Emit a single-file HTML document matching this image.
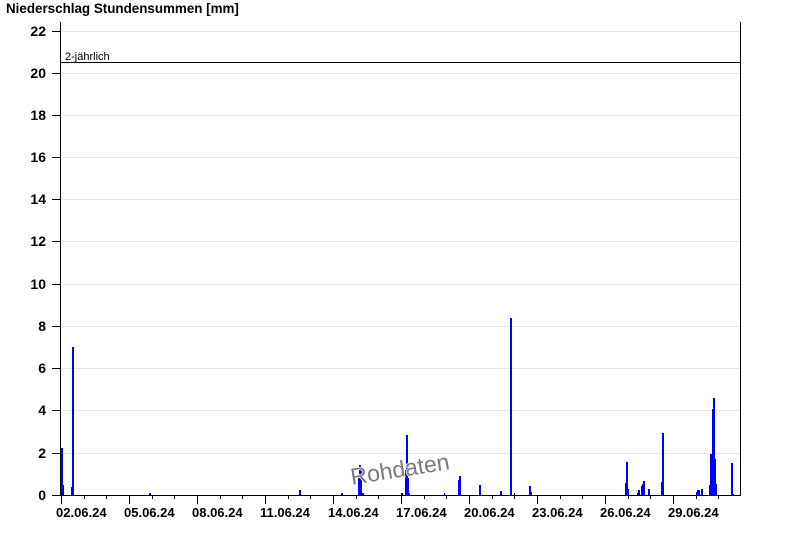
<!DOCTYPE html>
<html><head><meta charset="utf-8"><style>
html,body{margin:0;padding:0;background:#fff;}
svg{display:block;font-family:"Liberation Sans",Arial,sans-serif;}
</style></head><body>
<svg width="800" height="550" viewBox="0 0 800 550" xmlns="http://www.w3.org/2000/svg">
<text x="6" y="13" font-size="13.4" font-weight="bold" fill="#000">Niederschlag Stundensummen [mm]</text>
<g stroke="#e8e8e8" stroke-width="1">
<line x1="61" y1="31.5" x2="740" y2="31.5"/><line x1="61" y1="73.5" x2="740" y2="73.5"/>
<line x1="61" y1="115.5" x2="740" y2="115.5"/><line x1="61" y1="157.5" x2="740" y2="157.5"/>
<line x1="61" y1="199.5" x2="740" y2="199.5"/><line x1="61" y1="241.5" x2="740" y2="241.5"/>
<line x1="61" y1="284.5" x2="740" y2="284.5"/><line x1="61" y1="326.5" x2="740" y2="326.5"/>
<line x1="61" y1="368.5" x2="740" y2="368.5"/><line x1="61" y1="410.5" x2="740" y2="410.5"/>
<line x1="61" y1="453.5" x2="740" y2="453.5"/>
</g>
<g font-size="14" font-weight="bold" text-anchor="end" fill="#000">
<text x="46" y="36">22</text><text x="46" y="78">20</text><text x="46" y="120">18</text>
<text x="46" y="162">16</text><text x="46" y="204">14</text><text x="46" y="246">12</text>
<text x="46" y="289">10</text><text x="46" y="331">8</text><text x="46" y="373">6</text>
<text x="46" y="415">4</text><text x="46" y="458">2</text><text x="46" y="500">0</text>
</g>
<g stroke="#000" stroke-width="1">
<line x1="52" y1="31.5" x2="60" y2="31.5"/><line x1="52" y1="73.5" x2="60" y2="73.5"/>
<line x1="52" y1="115.5" x2="60" y2="115.5"/><line x1="52" y1="157.5" x2="60" y2="157.5"/>
<line x1="52" y1="199.5" x2="60" y2="199.5"/><line x1="52" y1="241.5" x2="60" y2="241.5"/>
<line x1="52" y1="284.5" x2="60" y2="284.5"/><line x1="52" y1="326.5" x2="60" y2="326.5"/>
<line x1="52" y1="368.5" x2="60" y2="368.5"/><line x1="52" y1="410.5" x2="60" y2="410.5"/>
<line x1="52" y1="453.5" x2="60" y2="453.5"/><line x1="52" y1="495.5" x2="60" y2="495.5"/>
</g>
<g fill="#0000ff">
<rect x="61" y="448" width="2" height="47"/><rect x="63" y="485" width="1" height="10"/>
<rect x="71" y="487" width="1" height="8"/><rect x="72" y="347" width="2" height="148"/>
<rect x="149" y="493" width="2" height="2"/>
<rect x="299" y="490" width="2" height="5"/>
<rect x="341" y="493" width="2" height="2"/>
<rect x="358" y="476" width="1" height="19"/><rect x="359" y="465" width="2" height="30"/><rect x="361" y="470" width="1" height="25"/><rect x="362" y="493" width="2" height="2"/>
<rect x="401" y="493" width="2" height="2"/>
<rect x="405" y="470" width="1" height="25"/><rect x="406" y="435" width="2" height="60"/><rect x="408" y="478" width="1" height="17"/><rect x="409" y="493" width="1" height="2"/>
<rect x="444" y="493" width="1" height="2"/>
<rect x="458" y="480" width="1" height="15"/><rect x="459" y="476" width="2" height="19"/>
<rect x="479" y="485" width="2" height="10"/>
<rect x="500" y="491" width="2" height="4"/>
<rect x="510" y="318" width="2" height="177"/>
<rect x="514" y="493" width="1" height="2"/>
<rect x="529" y="486" width="2" height="9"/><rect x="531" y="492" width="1" height="3"/>
<rect x="625" y="483" width="1" height="12"/><rect x="626" y="462" width="2" height="33"/><rect x="628" y="489" width="1" height="6"/>
<rect x="637" y="493" width="1" height="2"/><rect x="638" y="490" width="2" height="5"/><rect x="641" y="486" width="1" height="9"/><rect x="642" y="484" width="1" height="11"/><rect x="643" y="481" width="2" height="14"/><rect x="648" y="489" width="2" height="6"/>
<rect x="661" y="482" width="1" height="13"/><rect x="662" y="433" width="2" height="62"/>
<rect x="696" y="492" width="1" height="3"/><rect x="697" y="490" width="3" height="5"/><rect x="701" y="489" width="2" height="6"/>
<rect x="709" y="485" width="1" height="10"/><rect x="710" y="454" width="2" height="41"/><rect x="712" y="409" width="1" height="86"/><rect x="713" y="398" width="2" height="97"/><rect x="715" y="459" width="1" height="36"/><rect x="716" y="484" width="1" height="11"/>
<rect x="731" y="463" width="2" height="32"/><rect x="733" y="494" width="1" height="1"/>
</g>
<line x1="60" y1="62.5" x2="740" y2="62.5" stroke="#000" stroke-width="1"/>
<text x="65" y="60" font-size="11" fill="#000">2-jährlich</text>
<line x1="60.5" y1="22" x2="60.5" y2="496" stroke="#000"/>
<line x1="740.5" y1="22" x2="740.5" y2="496" stroke="#000"/>
<line x1="60" y1="495.5" x2="741" y2="495.5" stroke="#000"/>
<g stroke="#000" stroke-width="1">
<line x1="61.5" y1="495" x2="61.5" y2="504"/><line x1="129.5" y1="495" x2="129.5" y2="504"/>
<line x1="197.5" y1="495" x2="197.5" y2="504"/><line x1="265.5" y1="495" x2="265.5" y2="504"/>
<line x1="333.5" y1="495" x2="333.5" y2="504"/><line x1="401.5" y1="495" x2="401.5" y2="504"/>
<line x1="469.5" y1="495" x2="469.5" y2="504"/><line x1="537.5" y1="495" x2="537.5" y2="504"/>
<line x1="605.5" y1="495" x2="605.5" y2="504"/><line x1="673.5" y1="495" x2="673.5" y2="504"/>
<line x1="84.5" y1="495" x2="84.5" y2="499"/><line x1="106.5" y1="495" x2="106.5" y2="499"/>
<line x1="152.5" y1="495" x2="152.5" y2="499"/><line x1="174.5" y1="495" x2="174.5" y2="499"/>
<line x1="220.5" y1="495" x2="220.5" y2="499"/><line x1="242.5" y1="495" x2="242.5" y2="499"/>
<line x1="288.5" y1="495" x2="288.5" y2="499"/><line x1="310.5" y1="495" x2="310.5" y2="499"/>
<line x1="356.5" y1="495" x2="356.5" y2="499"/><line x1="378.5" y1="495" x2="378.5" y2="499"/>
<line x1="424.5" y1="495" x2="424.5" y2="499"/><line x1="446.5" y1="495" x2="446.5" y2="499"/>
<line x1="492.5" y1="495" x2="492.5" y2="499"/><line x1="514.5" y1="495" x2="514.5" y2="499"/>
<line x1="560.5" y1="495" x2="560.5" y2="499"/><line x1="582.5" y1="495" x2="582.5" y2="499"/>
<line x1="628.5" y1="495" x2="628.5" y2="499"/><line x1="650.5" y1="495" x2="650.5" y2="499"/>
<line x1="696.5" y1="495" x2="696.5" y2="499"/><line x1="718.5" y1="495" x2="718.5" y2="499"/>
</g>
<g font-size="13" font-weight="bold" fill="#000">
<text x="56" y="517">02.06.24</text><text x="124" y="517">05.06.24</text>
<text x="192" y="517">08.06.24</text><text x="260" y="517">11.06.24</text>
<text x="328" y="517">14.06.24</text><text x="396" y="517">17.06.24</text>
<text x="464" y="517">20.06.24</text><text x="532" y="517">23.06.24</text>
<text x="600" y="517">26.06.24</text><text x="668" y="517">29.06.24</text>
</g>
<text x="400" y="477" font-size="23" text-anchor="middle" fill="#7a7a7a" stroke="#fff" stroke-width="1.5" paint-order="stroke" transform="rotate(-9 400 470)">Rohdaten</text>
</svg>
</body></html>
